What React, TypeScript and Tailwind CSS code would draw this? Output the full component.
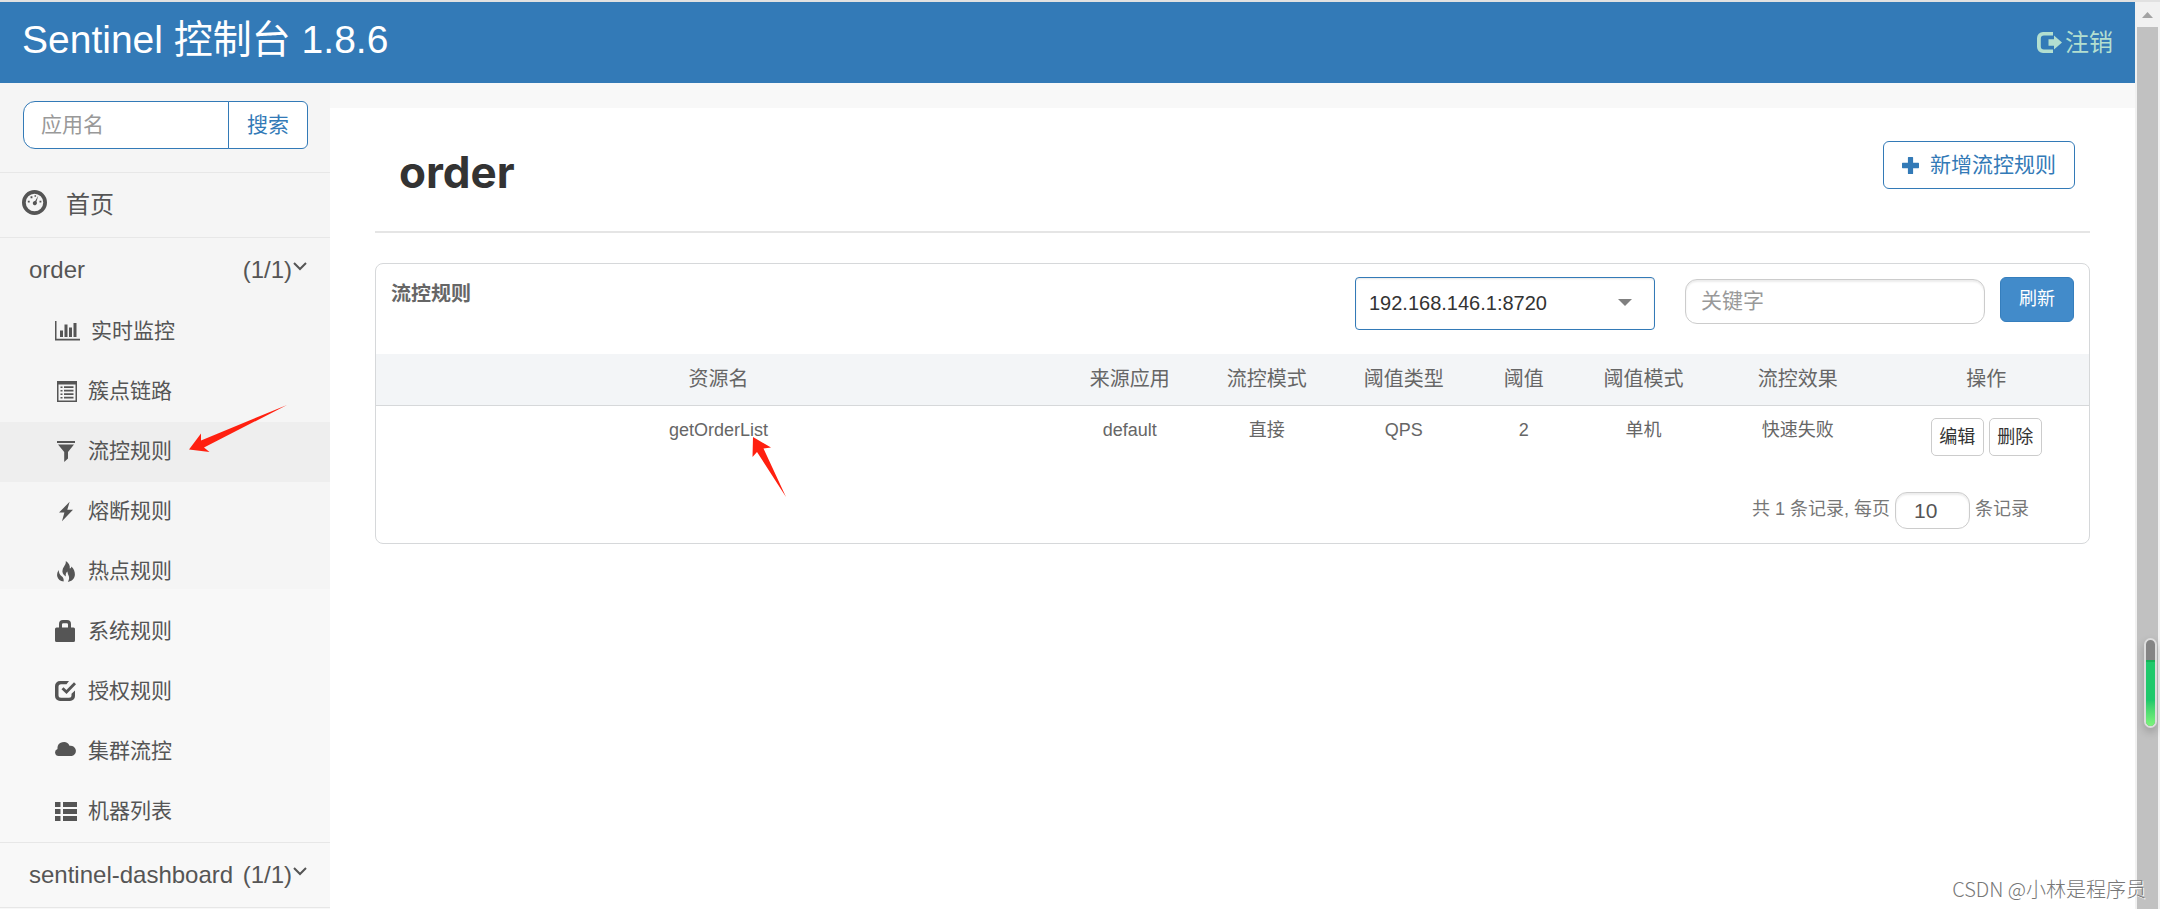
import React from "react";

type IconProps = { className?: string };

const base = "shrink-0 fill-current";

const DashboardIcon = ({ className = "" }: IconProps) => (
  <svg viewBox="0 0 24 24" className={`${base} ${className}`}>
    <path
      fillRule="evenodd"
      d="M12 0a12 12 0 1 0 0 24 12 12 0 0 0 0-24Zm0 3.6a8.4 8.4 0 1 1 0 16.8 8.4 8.4 0 0 1 0-16.8Z"
    />
    <path d="M15.6 5.6 13.9 11.3a2 2 0 1 1-1.3-.7ZM8.2 6h1.8v1.8H8.2ZM12 5h1.5v1.5H12ZM5.6 10.2h1.8V12H5.6ZM16.8 10.2h1.8V12h-1.8Z" />
  </svg>
);

const StatsIcon = ({ className = "" }: IconProps) => (
  <svg viewBox="0 0 25 20" className={`${base} ${className}`}>
    <path d="M0 0h1.5v17.8H25v1.7H0ZM5 9.500h3v6.500H5ZM9.500 3.500h3v12.500h-3ZM14 6.500h3v9.500h-3ZM18.500 2h3v14h-3Z" />
  </svg>
);

const ListAltIcon = ({ className = "" }: IconProps) => (
  <svg viewBox="0 0 20 21" className={`${base} ${className}`}>
    <path
      fillRule="evenodd"
      d="M0 0h20v21H0ZM1.500 3.500v16h17v-16ZM3.500 5.500h2V7h-2ZM7 5.200h9.500v1.900H7ZM3.500 9h2v1.500h-2ZM7 8.700h9.500v1.900H7ZM3.500 12.500h2V14h-2ZM7 12.200h9.500v1.900H7ZM3.500 16h2v1.500h-2ZM7 15.700h9.500v1.900H7Z"
    />
  </svg>
);

const FilterIcon = ({ className = "" }: IconProps) => (
  <svg viewBox="0 0 18 21" className={`${base} ${className}`}>
    <path d="M0 0h18v2H0ZM1 3.400h16L11 11v6.500L7.200 21V11Z" />
  </svg>
);

const FlashIcon = ({ className = "" }: IconProps) => (
  <svg viewBox="0 0 15 21" className={`${base} ${className}`}>
    <path d="M11.400 0 0 11.700h5.800L3.200 21 15 8.600H8.900Z" />
  </svg>
);

const FireIcon = ({ className = "" }: IconProps) => (
  <svg viewBox="0 0 18 21" className={`${base} ${className}`}>
    <path d="M8.800 0c2.800 1.800 4.400 4.300 4 7.600 1.200-.2 1.500-1 1.600-2C16.800 8 18 10.800 17.900 13.600c-.1 4-3 6.900-7 7.400.6-1.500 1.200-2.600 1.200-4 .1-2.400-1.600-3.700-1.700-6.500-1.600 1.200-1.900 2.900-1.500 5C5.800 13.600 4.700 11 5.800 8c.9-2.600 3.400-4.400 3-8Z" />
    <path d="M1.700 9c.1 3 1.100 4.800 3.300 6.500 1.500 1.300 1.900 2.800 1.600 4.900C3.400 20.200.8 18.200.2 15.200-.2 12.900.6 10.800 1.700 9Z" />
  </svg>
);

const LockIcon = ({ className = "" }: IconProps) => (
  <svg viewBox="0 0 20 22" className={`${base} ${className}`}>
    <path
      fillRule="evenodd"
      d="M4 7.500V4a4 4 0 0 1 4-4h4a4 4 0 0 1 4 4v3.500h2.500A1.500 1.500 0 0 1 20 9v11.500a1.500 1.500 0 0 1-1.500 1.500h-17A1.500 1.500 0 0 1 0 20.500V9a1.500 1.500 0 0 1 1.500-1.500ZM7 7.500h6V4.500a1.200 1.200 0 0 0-1.200-1.200H8.200A1.200 1.200 0 0 0 7 4.500Z"
    />
  </svg>
);

const CheckIcon = ({ className = "" }: IconProps) => (
  <svg viewBox="0 0 21 20" className={`${base} ${className}`}>
    <path d="M5 0h9l-2.500 3.200H6A2.500 2.500 0 0 0 3.500 5.700v8.600A2.500 2.500 0 0 0 6 16.800h8a2.500 2.500 0 0 0 2.500-2.500v-1.500L20 9.500V15a5 5 0 0 1-5 5H5a5 5 0 0 1-5-5V5a5 5 0 0 1 5-5Z" />
    <path d="m6.500 8.200 2-1.900 2.900 2.800L19 1.200l2 2-9.500 9.900Z" />
  </svg>
);

const CloudIcon = ({ className = "" }: IconProps) => (
  <svg viewBox="0 0 22 14" className={`${base} ${className}`}>
    <path d="M3.600 14A3.600 3.600 0 0 1 2.500 7 6.300 6.300 0 0 1 14.500 3.800 5.200 5.200 0 1 1 16.800 14Z" />
  </svg>
);

const ThListIcon = ({ className = "" }: IconProps) => (
  <svg viewBox="0 0 22 19" className={`${base} ${className}`}>
    <path d="M0 0h5.500v5H0ZM8 0h14v5H8ZM0 7h5.500v5H0ZM8 7h14v5H8ZM0 14h5.500v5H0ZM8 14h14v5H8Z" />
  </svg>
);

const LogoutIcon = ({ className = "" }: IconProps) => (
  <svg viewBox="0 0 25 21" className={`${base} ${className}`}>
    <path d="M16 0v3.600H7A3.200 3.200 0 0 0 3.800 6.800v7.400A3.200 3.200 0 0 0 7 17.400h9V21H6a6 6 0 0 1-6-6V6a6 6 0 0 1 6-6Z" />
    <path d="M11.500 7.200H17V3.600l8 6.900-8 6.900v-3.600h-5.500Z" />
  </svg>
);

const PlusIcon = ({ className = "" }: IconProps) => (
  <svg viewBox="0 0 17 17" className={`${base} ${className}`}>
    <path d="M6.500 0h4a.6.6 0 0 1 .6.600v5.200h5.300a.6.6 0 0 1 .6.600v4.200a.6.6 0 0 1-.6.600h-5.300v5.200a.6.6 0 0 1-.6.600h-4a.6.6 0 0 1-.6-.6v-5.200H.6a.6.6 0 0 1-.6-.6V6.400a.6.6 0 0 1 .6-.6h5.300V.600a.6.6 0 0 1 .6-.6Z" />
  </svg>
);

const AngleDownIcon = ({ className = "" }: IconProps) => (
  <svg viewBox="0 0 14 9" className={`shrink-0 ${className}`}>
    <path d="m1 1 6 6 6-6" fill="none" stroke="currentColor" strokeWidth="2" />
  </svg>
);

const menuItems = [
  { text: "实时监控", icon: <StatsIcon className="mr-px h-5 w-[25px]" />, active: false },
  { text: "簇点链路", icon: <ListAltIcon className="mr-px ml-0.5 h-[21px] w-5" />, active: false },
  { text: "流控规则", icon: <FilterIcon className="mr-[3px] ml-0.5 h-[21px] w-[18px]" />, active: true },
  { text: "熔断规则", icon: <FlashIcon className="mr-[5px] ml-1 h-[21px] w-[14px]" />, active: false },
  { text: "热点规则", icon: <FireIcon className="mr-[3px] ml-0.5 h-[21px] w-[18px]" />, active: false },
  { text: "系统规则", icon: <LockIcon className="mr-[3px] h-[22px] w-5" />, active: false },
  { text: "授权规则", icon: <CheckIcon className="mr-0.5 h-5 w-[21px]" />, active: false },
  { text: "集群流控", icon: <CloudIcon className="mr-px mb-1 h-[14px] w-[22px]" />, active: false },
  { text: "机器列表", icon: <ThListIcon className="mr-px h-[19px] w-[22px]" />, active: false },
];

const columns = [
  { text: "资源名", width: "w-[40%]" },
  { text: "来源应用", width: "w-[8%]" },
  { text: "流控模式", width: "w-[8%]" },
  { text: "阈值类型", width: "w-[8%]" },
  { text: "阈值", width: "w-[6%]" },
  { text: "阈值模式", width: "w-[8%]" },
  { text: "流控效果", width: "w-[10%]" },
  { text: "操作", width: "w-[12%]" },
];

const rules = [["getOrderList", "default", "直接", "QPS", "2", "单机", "快速失败"]];

const AppRow = ({ name }: { name: string }) => (
  <a href="#" className="flex h-16 items-center pr-[23px] pl-[29px] text-2xl">
    <span className="flex-1">{name}</span>
    <span>(1/1)</span>
    <AngleDownIcon className="mb-2 ml-px h-[9px] w-[14px]" />
  </a>
);

const Header = () => (
  <header className="flex h-[83px] items-center justify-between border-t-2 border-[#e1e1e1] bg-[#337ab7] px-[22px]">
    <a href="#" className="pb-1.5 text-[39px] leading-[58px] text-white">
      Sentinel 控制台 1.8.6
    </a>
    <a href="#" className="flex items-center gap-[3px] text-2xl text-[#b3dfd0]">
      <LogoutIcon className="h-[21px] w-[25px]" />
      注销
    </a>
  </header>
);

const Sidebar = () => (
  <nav className="w-[330px] shrink-0 bg-[#f8f8f8] bg-[linear-gradient(#f5f5f5,#f5f5f5)] bg-[length:100%_506px] bg-no-repeat text-[#555]">
    <form className="flex h-[90px] border-b border-[#e7e7e7] pt-[18px] pr-[22px] pl-[23px]">
      <input
        type="text"
        aria-label="应用名"
        placeholder="应用名"
        className="h-12 min-w-0 flex-1 rounded-l-xl border border-[#337ab7] bg-white px-[17px] text-[21px] placeholder:text-[#999]"
      />
      <button
        type="button"
        className="-ml-px h-12 w-20 rounded-r-md border border-[#337ab7] bg-white text-[21px] text-[#337ab7]"
      >
        搜索
      </button>
    </form>
    <a href="#" className="flex h-[65px] items-center gap-[19px] border-b border-[#e7e7e7] pl-[22px] text-2xl">
      <DashboardIcon className="mb-1.5 h-[25px] w-[25px]" />
      首页
    </a>
    <AppRow name="order" />
    <ul>
      {menuItems.map((item) => (
        <li key={item.text}>
          <a
            href="#"
            className={`flex h-[60px] items-center gap-[10px] pb-0.5 pl-[55px] text-[21px] ${
              item.active ? "bg-[#eee]" : ""
            }`}
          >
            {item.icon}
            {item.text}
          </a>
        </li>
      ))}
    </ul>
    <div className="border-y border-[#e7e7e7]">
      <AppRow name="sentinel-dashboard" />
    </div>
  </nav>
);

const RulePanel = () => (
  <section className="mt-[30px] rounded-lg border border-[#d6d8da] text-[#666]">
    <div className="flex h-[90px] items-start px-[15px] pt-[13px]">
      <h2 className="flex-1 pt-[3px] text-xl font-bold">流控规则</h2>
      <div className="relative mr-[30px]">
        <select
          aria-label="机器"
          className="h-[53px] w-[300px] appearance-none rounded border border-[#337ab7] bg-white px-[13px] pb-0.5 text-xl text-[#333] shadow-[inset_0_1px_2px_rgba(0,0,0,0.1)]"
        >
          <option>192.168.146.1:8720</option>
        </select>
        <svg viewBox="0 0 14 7" className="absolute top-[22px] right-[23px] h-[7px] w-[14px] fill-[#808080]">
          <path d="M0 0h14L7 7Z" />
        </svg>
      </div>
      <input
        type="text"
        aria-label="关键字"
        placeholder="关键字"
        className="mt-0.5 mr-[15px] h-[45px] w-[300px] rounded-xl border border-[#ccc] px-[15px] pb-0.5 text-[21px] shadow-[inset_0_2px_2px_rgba(0,0,0,0.08)] placeholder:text-[#999]"
      />
      <button
        type="button"
        className="h-[45px] w-[74px] rounded-md border border-[#357ebd] bg-[#428bca] pb-0.5 text-lg text-white"
      >
        刷新
      </button>
    </div>
    <table className="w-full table-fixed text-center text-lg">
      <thead>
        <tr className="h-[51px] border-b border-[#d6d8da] bg-[#f3f5f7] text-xl">
          {columns.map((col) => (
            <th key={col.text} className={`font-normal ${col.width}`}>
              {col.text}
            </th>
          ))}
        </tr>
      </thead>
      <tbody>
        {rules.map((rule) => (
          <tr key={rule[0]} className="h-[74px] align-top">
            {rule.map((cell, i) => (
              <td key={i} className="pt-[10px]">
                {cell}
              </td>
            ))}
            <td className="pt-3">
              <div className="flex justify-center gap-[5px]">
                {["编辑", "删除"].map((text) => (
                  <button
                    key={text}
                    type="button"
                    className="h-[38px] w-[53px] rounded-[5px] border border-[#ccc] bg-white text-lg text-[#333]"
                  >
                    {text}
                  </button>
                ))}
              </div>
            </td>
          </tr>
        ))}
      </tbody>
    </table>
    <div className="flex h-16 items-start justify-end gap-[5px] pr-[60px] pt-[13px] text-lg text-[#777]">
      <label htmlFor="pageSize" className="pt-[3px]">
        共 1 条记录, 每页
      </label>
      <input
        id="pageSize"
        type="text"
        defaultValue="10"
        className="h-[37px] w-[75px] rounded-xl border border-[#ccc] px-[18px] text-[21px] text-[#555] shadow-[inset_0_2px_2px_rgba(0,0,0,0.08)]"
      />
      <span className="pt-[3px]">条记录</span>
    </div>
  </section>
);

const Scrollbar = () => (
  <div className="flex w-[25px] shrink-0 flex-col items-center border-t-2 border-[#e1e1e1] bg-[#f1f1f1]">
    <svg viewBox="0 0 11 6" className="mt-[10px] mb-[9px] h-[6px] w-[11px] shrink-0 fill-[#a3a3a3]">
      <path d="M0 6 5.500 0 11 6Z" />
    </svg>
    <div className="w-[21px] flex-1 bg-[#c1c1c1]" />
  </div>
);

// floating widgets and marks drawn over the page
const Overlays = () => (
  <>
    <svg viewBox="0 0 98 47" className="absolute top-[405px] left-[189px] h-[47px] w-[98px] fill-[#ff2010]">
      <path d="M0 44.500 12 28.500V35.500L98 0 15 42.500 20.500 47Z" />
    </svg>
    <svg viewBox="0 0 34 60" className="absolute top-[437px] left-[752px] h-[60px] w-[34px] fill-[#ff2010]">
      <path d="M1 0 19 10.500 11.500 11.500 34 60 5 15 .5 20Z" />
    </svg>
    <div className="absolute top-[638px] right-[3px] h-[90px] w-[13px] overflow-hidden rounded-full border-2 border-[#ddd] bg-[#858585] pt-[20px] shadow-[0_4px_8px_rgba(0,0,0,0.2)]">
      <div className="h-full border-t-2 border-[#18b058] bg-linear-to-b from-[#1fc96b] from-60% to-[#7cf57c]" />
    </div>
    <div className="absolute right-[14px] bottom-1.5 font-['Noto_Sans_CJK_SC',sans-serif] text-xl font-light text-[#777] [text-shadow:1px_1px_0_#fff]">
      CSDN @小林是程序员
    </div>
  </>
);

const App: React.FC = () => {
  return (
    <div className="relative flex h-screen overflow-hidden bg-white font-['Liberation_Sans','Noto_Sans_CJK_SC',sans-serif]">
      <div className="flex min-w-0 flex-1 flex-col">
        <Header />
        <div className="flex flex-1">
          <Sidebar />
          <main className="min-w-0 flex-1 border-t-[25px] border-[#f8f8f8] px-[45px]">
            <div className="flex h-[125px] items-start justify-between border-b-2 border-[#e5e5e5] pr-[15px] pl-6">
              <h1 className="pt-8 font-['Inter',sans-serif] text-[44px] leading-[64px] font-bold text-[#333]">
                order
              </h1>
              <button
                type="button"
                className="mt-[33px] flex h-12 w-[192px] items-center justify-center gap-[11px] rounded-md border border-[#337ab7] text-[21px] text-[#337ab7]"
              >
                <PlusIcon className="h-[17px] w-[17px]" />
                新增流控规则
              </button>
            </div>
            <RulePanel />
          </main>
        </div>
      </div>
      <Scrollbar />
      <Overlays />
    </div>
  );
};

export default App;
